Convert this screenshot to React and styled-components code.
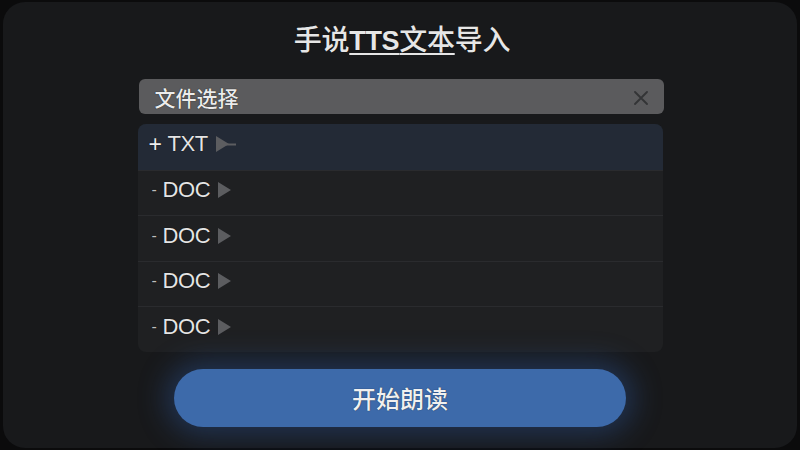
import React from "react";
import styled, { createGlobalStyle } from "styled-components";

const GlobalStyle = createGlobalStyle`
  html, body {
    margin: 0;
    padding: 0;
    background: #0b0b0c;
  }
  body {
    font-family: "Noto Sans CJK SC", "Liberation Sans", sans-serif;
  }
`;

const Panel = styled.div`
  box-sizing: border-box;
  width: 794px;
  height: 446px;
  margin: 2px 3px;
  background: #18191b;
  border-radius: 22px;
  display: flex;
  flex-direction: column;
  align-items: center;
  padding-top: 16px;
`;

const Title = styled.h1`
  margin: 0 0 0 4px;
  font-size: 28px;
  font-weight: 500;
  line-height: 40px;
  color: #e6e6e6;
  letter-spacing: -0.3px;
  text-shadow: 0 0 1px rgba(0, 0, 0, 0.9);

  u {
    text-decoration-thickness: 2px;
    text-underline-offset: 3px;
  }
`;

const Latin = styled.span`
  font-family: "Liberation Sans", sans-serif;
  font-weight: 700;
  font-size: 27px;
`;

const Picker = styled.div`
  box-sizing: border-box;
  width: 525px;
  height: 35px;
  margin: 18px 0 0 2px;
  background: #5b5b5d;
  border-radius: 6px;
  display: flex;
  align-items: center;
  justify-content: space-between;
  padding: 0 16px 0 16px;
  font-size: 21px;
  font-weight: 500;
  color: #ececec;
  text-shadow: 0 0 1px #000;
`;

const CloseIcon = styled.svg`
  width: 14px;
  height: 14px;
  margin-top: 2px;
`;

const List = styled.div`
  width: 525px;
  margin-top: 10px;
  background: #1f2022;
  border-radius: 8px;
  overflow: hidden;
  display: flex;
  flex-direction: column;
`;

const Row = styled.div`
  box-sizing: border-box;
  height: 45.5px;
  display: flex;
  align-items: center;
  padding-left: ${(p) => (p.$open ? "11px" : "14px")};
  padding-bottom: 5px;
  background: ${(p) => (p.$open ? "#232a36" : "transparent")};
  border-top: ${(p) => (p.$first ? "none" : "1px solid #2a2b2e")};
  font-family: "Liberation Sans", sans-serif;
  font-size: 22px;
  letter-spacing: -0.4px;
  color: #e4e4e4;
  text-shadow: 0 0 1px #000;
`;

const Sign = styled.span`
  display: inline-block;
  width: ${(p) => (p.$open ? "19px" : "11px")};
  font-size: ${(p) => (p.$open ? "23px" : "16px")};
  color: ${(p) => (p.$open ? "#eeeeee" : "#bdbdbd")};
`;

const Arrow = styled.svg`
  width: 22px;
  height: 18px;
  margin-left: 7px;
`;

const Action = styled.div`
  margin-top: 17px;
  width: 452px;
  height: 58px;
  border-radius: 29px;
  background: #3d6aaa;
  box-shadow: 0 0 28px 8px rgba(44, 84, 150, 0.45);
  display: flex;
  align-items: center;
  justify-content: center;
  font-size: 24px;
  font-weight: 500;
  color: #f0f0f0;
  text-shadow: 0 0 1px #0a1a30;
`;

const files = [
  { kind: "TXT", open: true },
  { kind: "DOC" },
  { kind: "DOC" },
  { kind: "DOC" },
  { kind: "DOC" },
];

function FileRow({ kind, open, first }) {
  return (
    <Row $open={open} $first={first}>
      <Sign $open={open}>{open ? "+" : "-"}</Sign>
      {kind}
      <Arrow viewBox="0 0 22 18">
        <path d="M1 1 L14 9 L1 17 Z" fill="#5c5d60" />
        {open && <rect x="11" y="8.5" width="10" height="2" fill="#5c5d60" />}
      </Arrow>
    </Row>
  );
}

export default function App() {
  return (
    <>
      <GlobalStyle />
      <Panel>
        <Title>
          手说<u><Latin>TTS</Latin>文本</u>导入
        </Title>
        <Picker>
          文件选择
          <CloseIcon viewBox="0 0 14 14">
            <path
              d="M1 1 L13 13 M13 1 L1 13"
              stroke="#333436"
              strokeWidth="1.8"
              strokeLinecap="round"
            />
          </CloseIcon>
        </Picker>
        <List>
          {files.map((f, i) => (
            <FileRow key={i} kind={f.kind} open={f.open} first={i === 0} />
          ))}
        </List>
        <Action>开始朗读</Action>
      </Panel>
    </>
  );
}
